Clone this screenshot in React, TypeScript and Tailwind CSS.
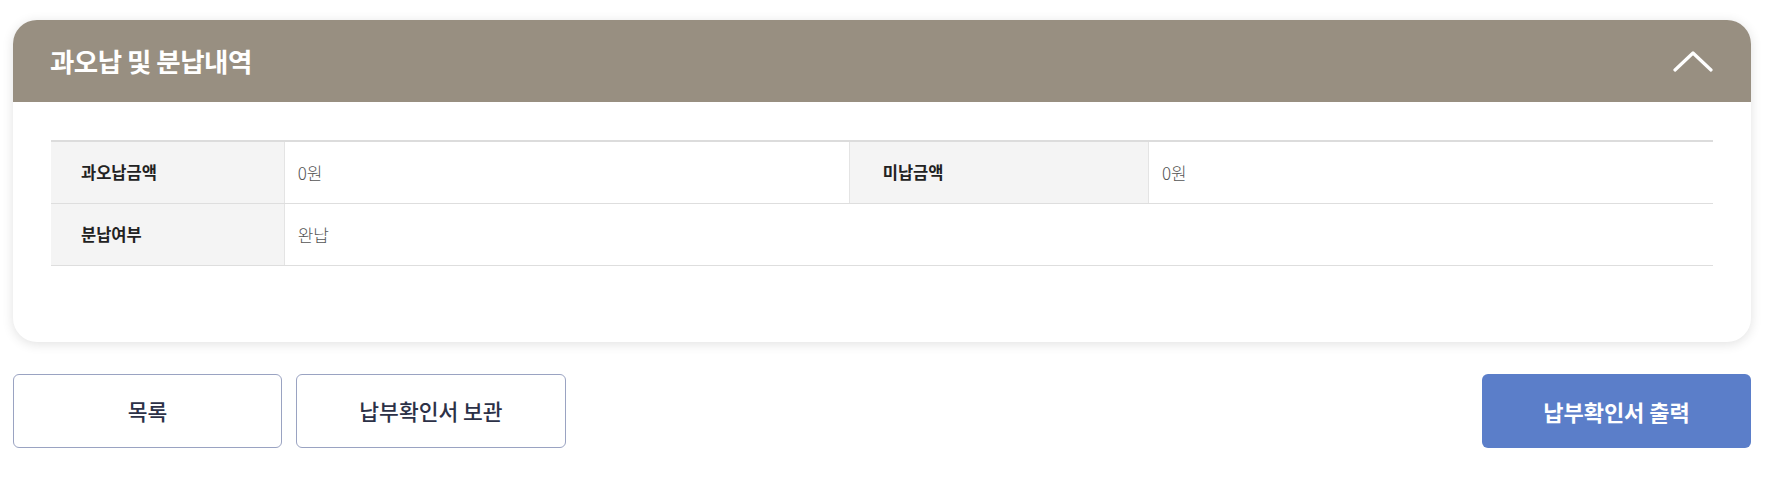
import React from "react";

function ChevronUp() {
  return (
    <svg width="40" height="24" viewBox="0 0 40 24" fill="none">
      <path
        d="M2 21L20 4L38 21"
        stroke="#fff"
        strokeWidth="3.2"
        strokeLinecap="round"
        strokeLinejoin="round"
      />
    </svg>
  );
}

const rows = [
  { label: "과오납금액", value: "0원", label2: "미납금액", value2: "0원" },
  { label: "분납여부", value: "완납" },
];

export default function App() {
  return (
    <div className="min-h-screen bg-white pl-[13px] pr-[23px] pt-5 font-['Noto_Sans_CJK_KR',sans-serif]">
      <section className="overflow-hidden rounded-[24px] bg-white shadow-[0_2px_12px_rgba(0,0,0,0.12)]">
        <div className="flex h-[82px] items-center justify-between bg-[#988f81] pl-[37px] pr-[38px]">
          <h2 className="text-[26.5px] font-bold tracking-[-0.02em] text-white">과오납 및 분납내역</h2>
          <ChevronUp />
        </div>

        <div className="px-[38px] pt-[38px] pb-[76px]">
          <div className="border-t-2 border-[#dcdcdc]">
            {rows.map((r) => (
              <div
                key={r.label}
                className="grid h-[62px] grid-cols-[14%_34%_18%_34%] border-b border-[#dedede]"
              >
                <div className="flex items-center bg-[#f4f4f4] pl-[30px] text-[16.5px] font-bold text-[#222]">
                  {r.label}
                </div>
                <div className="flex items-center border-l border-[#e4e4e4] pl-[13px] text-[17px] font-light text-[#555]">
                  {r.value}
                </div>
                {r.label2 ? (
                  <>
                    <div className="flex items-center border-l border-[#e4e4e4] bg-[#f4f4f4] pl-[33px] text-[16.5px] font-bold text-[#222]">
                      {r.label2}
                    </div>
                    <div className="flex items-center border-l border-[#e4e4e4] pl-[13px] text-[17px] font-light text-[#555]">
                      {r.value2}
                    </div>
                  </>
                ) : (
                  <div className="col-span-2" />
                )}
              </div>
            ))}
          </div>
        </div>
      </section>

      <div className="mt-8 flex items-center justify-between">
        <div className="flex gap-[14px]">
          <button className="h-[74px] w-[269px] rounded-[6px] border border-[#9aa3c2] bg-white text-[21.5px] font-medium text-[#2c3147]">
            목록
          </button>
          <button className="h-[74px] w-[270px] rounded-[6px] border border-[#9aa3c2] bg-white text-[21.5px] font-medium text-[#2c3147]">
            납부확인서 보관
          </button>
        </div>
        <button className="h-[74px] w-[269px] rounded-[6px] bg-[#5b7ec9] text-[22px] font-bold text-white">
          납부확인서 출력
        </button>
      </div>
    </div>
  );
}
